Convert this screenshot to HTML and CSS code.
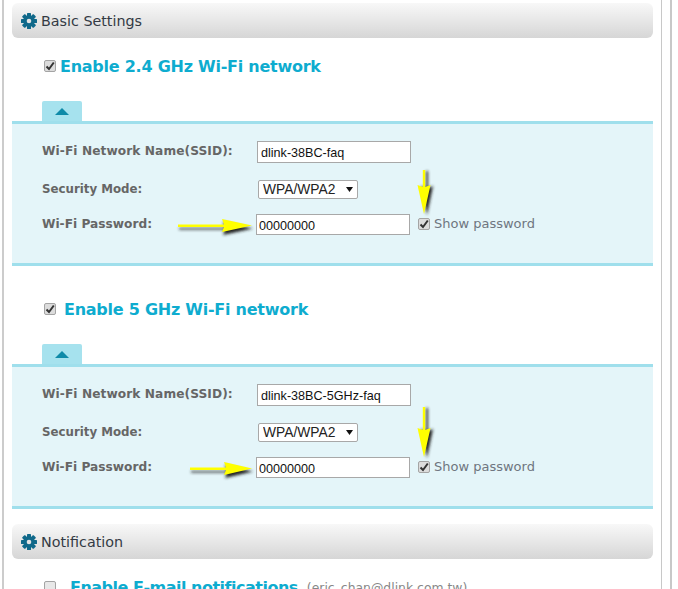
FILE: index.html
```html
<!DOCTYPE html>
<html>
  <head>
    <title>Wi-Fi Settings</title>
    <meta name="viewport" content="width=device-width, initial-scale=1.0" />
    <link rel="stylesheet" href="styles.css">
  </head>
  <body>
    <svg width="0" height="0" class="defs">
      <defs>
        <symbol id="gear" viewBox="0 0 16 16">
          <g fill="#10698a">
            <rect x="6" y="0" width="4" height="16" rx="0.6" />
            <rect x="6" y="0" width="4" height="16" rx="0.6" transform="rotate(45 8 8)" />
            <rect x="6" y="0" width="4" height="16" rx="0.6" transform="rotate(90 8 8)" />
            <rect x="6" y="0" width="4" height="16" rx="0.6" transform="rotate(135 8 8)" />
          </g>
          <circle cx="8" cy="8" r="4.4" fill="none" stroke="#10698a" stroke-width="2.6" />
          <circle cx="8" cy="8" r="2.3" fill="#e4e4e4" />
        </symbol>
        <filter id="soft" x="-40%" y="-40%" width="180%" height="180%">
          <feGaussianBlur stdDeviation="1.8" />
        </filter>
      </defs>
    </svg>

    <div class="outer">
      <div class="frame">
        <div class="section-bar">
          <svg class="gear"><use href="#gear" /></svg>
          <span>Basic Settings</span>
        </div>

        <div class="enable-row first">
          <input type="checkbox" class="check" checked />
          <h3>Enable 2.4 GHz Wi-Fi network</h3>
        </div>
        <div class="toggle-tab"><span class="tri"></span></div>
        <div class="wifi-panel">
          <div class="field-row name-row">
            <label>Wi-Fi Network Name(SSID):</label>
            <input type="text" class="text-box" value="dlink-38BC-faq" />
          </div>
          <div class="field-row mode-row">
            <label>Security Mode:</label>
            <select class="mode-select"><option>WPA/WPA2</option></select>
          </div>
          <div class="field-row pass-row">
            <label>Wi-Fi Password:</label>
            <input type="text" class="text-box pass" value="00000000" />
            <input type="checkbox" class="check show" checked />
            <span class="show-text">Show password</span>
          </div>
          <svg class="arrow-h" viewBox="0 0 74 16">
            <path d="M0 6 H46 L44 0 L74 6.5 L44 13 L46 7.5 H0 Z" fill="#222" filter="url(#soft)" transform="translate(1 3)" />
            <path d="M0 5.5 H46 L44 0 L74 6.5 L44 13 L46 8 H0 Z" fill="#ffff00" />
          </svg>
          <svg class="arrow-v" viewBox="0 0 14 44">
            <path d="M6 0 H8 V17 L13 15 L7 44 L1 15 L6 17 Z" fill="#222" filter="url(#soft)" transform="translate(3 1)" />
            <path d="M5.8 0 H8.2 V17 L13.5 15 L7 44 L0.5 15 L5.8 17 Z" fill="#ffff00" />
          </svg>
        </div>

        <div class="enable-row second">
          <input type="checkbox" class="check" checked />
          <h3>Enable 5 GHz Wi-Fi network</h3>
        </div>
        <div class="toggle-tab"><span class="tri"></span></div>
        <div class="wifi-panel">
          <div class="field-row name-row">
            <label>Wi-Fi Network Name(SSID):</label>
            <input type="text" class="text-box" value="dlink-38BC-5GHz-faq" />
          </div>
          <div class="field-row mode-row">
            <label>Security Mode:</label>
            <select class="mode-select"><option>WPA/WPA2</option></select>
          </div>
          <div class="field-row pass-row">
            <label>Wi-Fi Password:</label>
            <input type="text" class="text-box pass" value="00000000" />
            <input type="checkbox" class="check show" checked />
            <span class="show-text">Show password</span>
          </div>
          <svg class="arrow-h short" viewBox="0 0 62 16">
            <path d="M0 6 H36 L34 0 L62 6.5 L34 13 L36 7.5 H0 Z" fill="#222" filter="url(#soft)" transform="translate(1 3)" />
            <path d="M0 5.5 H36 L34 0 L62 6.5 L34 13 L36 8 H0 Z" fill="#ffff00" />
          </svg>
          <svg class="arrow-v tall" viewBox="0 0 14 50">
            <path d="M6 0 H8 V23 L13 21 L7 50 L1 21 L6 23 Z" fill="#222" filter="url(#soft)" transform="translate(3 1)" />
            <path d="M5.8 0 H8.2 V23 L13.5 21 L7 50 L0.5 21 L5.8 23 Z" fill="#ffff00" />
          </svg>
        </div>

        <div class="section-bar notify">
          <svg class="gear"><use href="#gear" /></svg>
          <span>Notification</span>
        </div>

        <div class="enable-row mail">
          <input type="checkbox" class="check off" />
          <h3>Enable E-mail notifications</h3>
          <span class="mail-addr">(eric_chan@dlink.com.tw)</span>
        </div>
      </div>
    </div>
  </body>
</html>
```

FILE: styles.css
```css
html,
body {
  margin: 0;
  padding: 0;
  background: #fff;
  height: 589px;
  overflow: hidden;
}
.defs {
  display: block;
  height: 0;
}
.outer {
  width: 670px;
  height: 589px;
  border-right: 2px solid #c8c8c8;
}
.frame {
  box-sizing: border-box;
  margin-left: 2px;
  width: 660px;
  height: 589px;
  padding: 3px 8px 0 8px;
  border-left: 2px solid #cccccc;
  border-right: 1px solid #c8c8c8;
  overflow: hidden;
}
.section-bar {
  display: flex;
  align-items: center;
  gap: 4px;
  height: 35px;
  padding-left: 9px;
  border-radius: 6px;
  background: linear-gradient(180deg, #f8f8f8 0%, #d6d6d6 100%);
  font-family: "DejaVu Sans", sans-serif;
  font-size: 14.3px;
  color: #333a44;
}
.gear {
  width: 16px;
  height: 16px;
}
.enable-row {
  display: flex;
  align-items: center;
}
.enable-row h3 {
  margin: 0;
  font-family: "DejaVu Sans", sans-serif;
  font-weight: 700;
  font-size: 16px;
  letter-spacing: -0.25px;
  color: #0eaccf;
  white-space: nowrap;
}
.enable-row.first {
  height: 24px;
  margin-top: 16px;
  padding-left: 32px;
  gap: 5px;
}
.enable-row.first h3 {
  margin-left: -1px;
}
.enable-row.second {
  height: 24px;
  margin-top: 31px;
  padding-left: 32px;
  gap: 8px;
}
.enable-row.mail {
  height: 24px;
  margin-top: 16px;
  padding-left: 32px;
  gap: 14px;
}
.enable-row.mail h3 {
  letter-spacing: -0.5px;
}
.check {
  appearance: none;
  -webkit-appearance: none;
  margin: 0;
  width: 12px;
  height: 12px;
  box-sizing: border-box;
  border: 1px solid #a4a4a4;
  border-radius: 2px;
  background-color: #dcdcdc;
  flex: none;
}
.check:checked {
  background-image: url("data:image/svg+xml,%3Csvg xmlns='http://www.w3.org/2000/svg' viewBox='0 0 10 10'%3E%3Cpath d='M1.5 5.5 L4 8 L8.8 1.5' fill='none' stroke='%23333' stroke-width='2'/%3E%3C/svg%3E");
  background-size: 10px 10px;
  background-repeat: no-repeat;
}
.check.off {
  background: #e8e8e8;
}
.toggle-tab {
  display: flex;
  justify-content: center;
  align-items: center;
  width: 40px;
  height: 20px;
  margin: 23px 0 0 30px;
  border-radius: 2px 2px 0 0;
  background: #a6e2ee;
}
.tri {
  width: 0;
  height: 0;
  border-left: 7px solid transparent;
  border-right: 7px solid transparent;
  border-bottom: 7px solid #0e8aa8;
}
.wifi-panel {
  position: relative;
  box-sizing: border-box;
  height: 145px;
  padding: 17px 0 0 30px;
  background: #e4f5f9;
  border-top: 3px solid #9fdfec;
  border-bottom: 3px solid #9fdfec;
}
.field-row {
  display: flex;
  align-items: center;
}
.field-row label {
  width: 215px;
  flex: none;
  font-family: "DejaVu Sans", sans-serif;
  font-weight: 700;
  font-size: 12.2px;
  color: #666;
  white-space: nowrap;
  padding-bottom: 2px;
}
.name-row {
  height: 22px;
}
.name-row label {
  padding-bottom: 3px;
  letter-spacing: 0.08px;
}
.mode-row {
  height: 19px;
  margin-top: 17px;
}
.mode-row label {
  font-size: 11.8px;
}
.pass-row {
  height: 21px;
  margin-top: 15px;
}
.pass-row label {
  width: 214px;
}
.text-box {
  box-sizing: border-box;
  width: 154px;
  height: 22px;
  margin: 0;
  padding: 3px 2px 1px 3px;
  border: 1px solid #a8a8a8;
  border-radius: 0;
  background: #fff;
  font-family: "Liberation Sans", sans-serif;
  font-size: 12.6px;
  color: #111;
  outline: none;
}
.text-box.pass {
  height: 21px;
  padding-left: 2px;
}
.mode-select {
  appearance: none;
  -webkit-appearance: none;
  box-sizing: border-box;
  width: 100px;
  height: 19px;
  margin: 0 0 0 1px;
  padding: 0 0 0 4px;
  border: 1px solid #a8a8a8;
  border-radius: 2px;
  background: #fff url("data:image/svg+xml,%3Csvg xmlns='http://www.w3.org/2000/svg' viewBox='0 0 7 5'%3E%3Cpath d='M0 0 H7 L3.5 5 Z' fill='%23111'/%3E%3C/svg%3E") no-repeat 87px 6px / 7px 5px;
  font-family: "Liberation Sans", sans-serif;
  font-size: 13.8px;
  color: #222;
}
.check.show {
  margin-left: 9px;
  position: relative;
  top: -1px;
  left: -1px;
}
.show-text {
  margin-left: 3px;
  padding-bottom: 2px;
  font-family: "DejaVu Sans", sans-serif;
  font-size: 13px;
  color: #6f7680;
}
.arrow-h {
  position: absolute;
  left: 166px;
  top: 95px;
  width: 74px;
  height: 16px;
  overflow: visible;
}
.arrow-h.short {
  left: 178px;
  width: 62px;
}
.arrow-v {
  position: absolute;
  left: 405px;
  top: 46px;
  width: 14px;
  height: 44px;
  overflow: visible;
}
.arrow-v.tall {
  top: 40px;
  height: 50px;
}
.section-bar.notify {
  margin-top: 15px;
}
.mail-addr {
  margin-left: -5px;
  font-family: "DejaVu Sans", sans-serif;
  font-size: 12.4px;
  color: #888;
  white-space: nowrap;
}
```
